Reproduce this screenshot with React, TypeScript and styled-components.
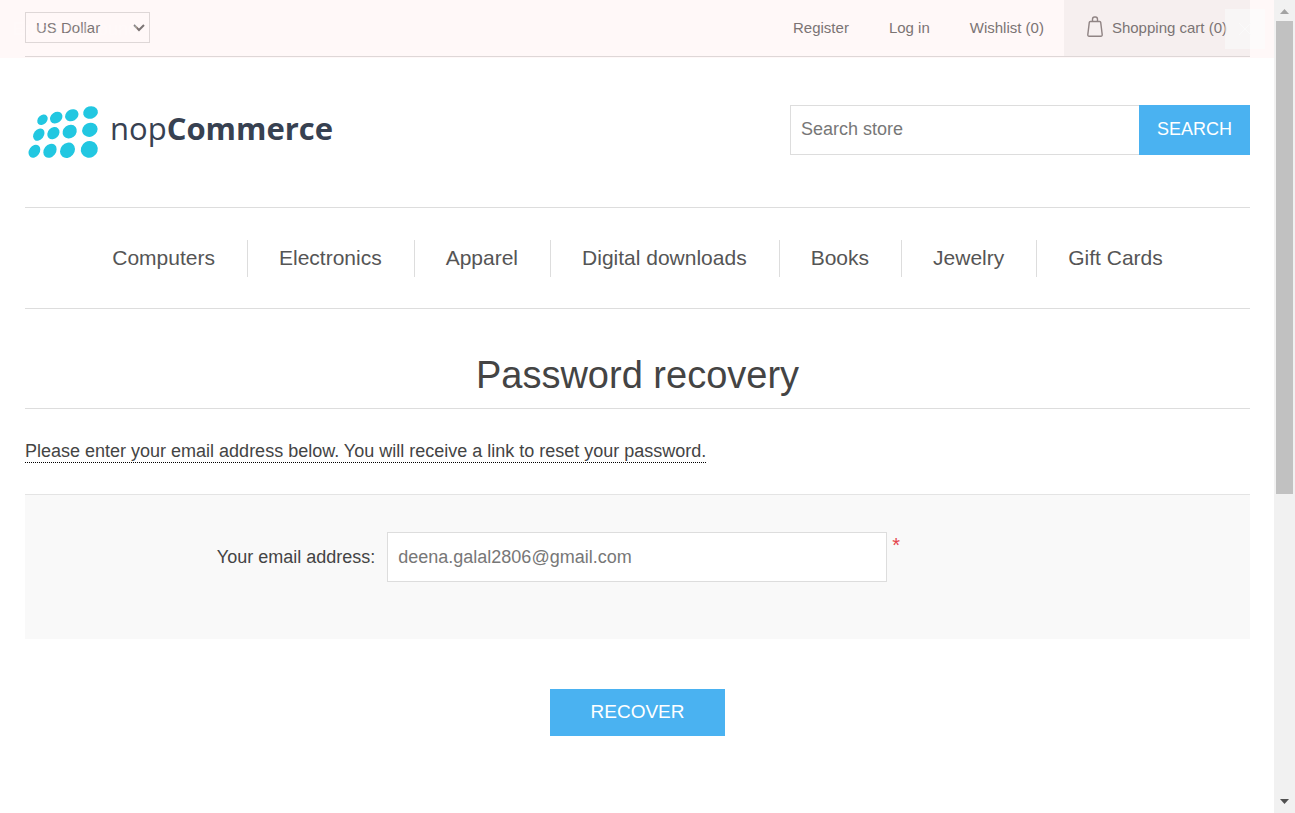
import React from 'react';
import styled, { createGlobalStyle } from 'styled-components';

const GlobalStyle = createGlobalStyle`
  * { box-sizing: border-box; }
  body {
    margin: 0;
    background: #fff;
    color: #444;
    font: 18px/22px "Liberation Sans", Arial, sans-serif;
  }
  a { color: inherit; text-decoration: none; }
  button, input, select { font-family: inherit; border-radius: 0; margin: 0; }
`;

const Window = styled.div`
  display: flex;
  min-height: 100vh;
`;

const Page = styled.div`
  position: relative;
  flex: 1;
  min-width: 0;
  padding: 0 24px 0 25px;
`;

const Notification = styled.div`
  position: absolute;
  inset: 0 0 auto 0;
  height: 58px;
  padding: 9px 9px 9px 13px;
  display: flex;
  align-items: center;
  justify-content: space-between;
  background: rgba(255, 60, 60, 0.035);
  pointer-events: none;
`;

const NotificationText = styled.p`
  margin: 0;
  color: rgba(255, 255, 255, 0.3);
`;

const CloseButton = styled.button`
  width: 40px;
  height: 40px;
  padding: 0;
  border: 0;
  display: flex;
  align-items: center;
  justify-content: center;
  background: rgba(250, 255, 255, 0.45);
  color: #fafafa;
`;

const TopBar = styled.div`
  height: 57px;
  border-bottom: 1px solid #ddd;
  display: flex;
  align-items: center;
  justify-content: space-between;
  font-size: 15px;
  color: #777;
`;

const CurrencyPicker = styled.div`
  position: relative;
  width: 125px;
  padding-bottom: 2px;
  svg {
    position: absolute;
    top: 12px;
    right: 5px;
    pointer-events: none;
  }
`;

const CurrencySelect = styled.select`
  display: block;
  appearance: none;
  width: 100%;
  height: 31px;
  padding: 0 20px 0 10px;
  border: 1px solid #ddd;
  background: transparent;
  color: #777;
  font-size: 15px;
`;

const HeaderLinks = styled.nav`
  display: flex;
  align-items: stretch;
  height: 100%;
`;

const HeaderLink = styled.a`
  display: flex;
  align-items: center;
  padding: 0 20px;
`;

const CartLink = styled(HeaderLink)`
  gap: 9px;
  padding: 0 23px;
  background: #f6f6f6;
  svg { margin-bottom: 2px; }
`;

const Header = styled.header`
  display: flex;
  align-items: center;
  justify-content: space-between;
  padding: 48px 0 52px;
  border-bottom: 1px solid #ddd;
`;

const LogoLink = styled.a`
  display: block;
  height: 50px;
  svg { display: block; overflow: visible; }
`;

const SearchForm = styled.form`
  display: flex;
  width: 460px;
`;

const TextInput = styled.input`
  height: 50px;
  min-width: 0;
  padding: 0 10px;
  border: 1px solid #ddd;
  background: #fff;
  color: #777;
  font-size: 18px;
  outline: 0;
  &::placeholder { color: #777; opacity: 1; }
`;

const SearchInput = styled(TextInput)`
  flex: 1;
  border-right: 0;
  padding-bottom: 2px;
`;

const PrimaryButton = styled.button<{ $large?: boolean }>`
  width: ${(p) => (p.$large ? 175 : 111)}px;
  height: ${(p) => (p.$large ? 47 : 50)}px;
  padding: 0 0 2px;
  border: 0;
  background: #4ab2f1;
  color: #fff;
  font-size: ${(p) => (p.$large ? 19 : 18)}px;
  text-transform: uppercase;
`;

const Menu = styled.ul`
  margin: 0;
  padding: 32px 0 31px;
  list-style: none;
  display: flex;
  justify-content: center;
  border-bottom: 1px solid #ddd;
`;

const MenuItem = styled.li`
  padding: 0 32px 2px;
  font-size: 21px;
  line-height: 35px;
  color: #555;
  & + & { border-left: 1px solid #ddd; padding-left: 31px; }
`;

const Title = styled.h1`
  margin: 0;
  padding: 43px 0 9px;
  border-bottom: 1px solid #ddd;
  text-align: center;
  font-size: 38px;
  line-height: 47px;
  font-weight: normal;
`;

const Instructions = styled.p`
  margin: 31px 0;
  line-height: 23px;
`;

const Tip = styled.span`
  display: inline-block;
  border-bottom: 1px dotted #000;
  line-height: 22px;
`;

const FieldPanel = styled.div`
  display: flex;
  min-height: 145px;
  padding: 37px 0 56px;
  border-top: 1px solid #e4e4e4;
  background: #f9f9f9;
`;

const FieldLabel = styled.label`
  width: 29%;
  padding: 0 5px 0 0;
  line-height: 50px;
  text-align: right;
`;

const EmailInput = styled(TextInput)`
  width: 500px;
  margin: 0 5px 0 7px;
`;

const Required = styled.span`
  color: #e4434b;
  font-size: 20px;
  line-height: 26px;
`;

const Actions = styled.div`
  display: flex;
  justify-content: center;
  padding: 50px 0;
`;

const ScrollTrack = styled.div`
  position: sticky;
  top: 0;
  height: 100vh;
  width: 21px;
  padding: 0 2px;
  display: flex;
  flex-direction: column;
  background: #f1f1f1;
`;

const ScrollArrow = styled.svg`
  display: block;
  width: 17px;
  height: 21px;
  flex: none;
`;

const ScrollThumb = styled.div`
  flex: 473;
  background: #c1c1c1;
`;

const ScrollRest = styled.div`
  flex: 298;
`;

const dots = [
  [42.5, 119.8, 5.9, 4.5, -45], [56.2, 117.6, 6.7, 5.3, -35], [71.8, 115.3, 7, 5.7, -30], [90.5, 112.5, 7.5, 6.2, -18],
  [38.8, 134.6, 6.7, 5, -52], [53.4, 133.2, 6.7, 5.5, -45], [69.7, 131.6, 7.5, 6.4, -38], [89.9, 129.8, 7.9, 6.9, -25],
  [34.4, 151.2, 7, 5.3, -55], [50, 150.8, 7.6, 6, -52], [67.5, 150.3, 8.2, 7, -50], [89.3, 149.4, 8.6, 8.2, -30],
];

const Logo = () => (
  <svg width="310" height="50" viewBox="25 105 310 50" role="img" aria-label="nopCommerce">
    {dots.map(([x, y, rx, ry, r]) => (
      <ellipse key={`${x}-${y}`} cx={x} cy={y} rx={rx} ry={ry} transform={`rotate(${r} ${x} ${y})`} fill="#22c7e1" />
    ))}
    <text x="110" y="140" fontFamily='"Open Sans", "Noto Sans", sans-serif' fontSize="31" fill="#374151">
      nop<tspan fontWeight="700">Commerce</tspan>
    </text>
  </svg>
);

const BagIcon = () => (
  <svg width="16" height="22" viewBox="0 0 16 22" fill="none" stroke="#8c8787" strokeWidth="1.4" aria-hidden="true">
    <path d="M3.300 5.500H12.700Q13.600 5.500 13.700 6.400L15.200 18.600Q15.300 20.300 13.800 20.300H2.200Q.7 20.300 .8 18.600L2.300 6.400Q2.400 5.500 3.300 5.500Z" />
    <path d="M5.500 5.500V3.200Q5.500 1 7.500 1H8.500Q10.500 1 10.500 3.200V5.500" />
  </svg>
);

const categories = ['Computers', 'Electronics', 'Apparel', 'Digital downloads', 'Books', 'Jewelry', 'Gift Cards'];

export default function App() {
  return (
    <>
      <GlobalStyle />
      <Window>
        <Page>
          <TopBar>
            <CurrencyPicker>
              <CurrencySelect aria-label="Currency" defaultValue="usd">
                <option value="usd">US Dollar</option>
                <option value="eur">Euro</option>
              </CurrencySelect>
              <svg width="12" height="8" viewBox="0 0 12 8" fill="none" stroke="#777" strokeWidth="2" aria-hidden="true">
                <path d="M1 1L6 6L11 1" />
              </svg>
            </CurrencyPicker>
            <HeaderLinks aria-label="Account">
              <HeaderLink href="#register">Register</HeaderLink>
              <HeaderLink href="#login">Log in</HeaderLink>
              <HeaderLink href="#wishlist">Wishlist (0)</HeaderLink>
              <CartLink href="#cart"><BagIcon />Shopping cart (0)</CartLink>
            </HeaderLinks>
          </TopBar>
          <Header>
            <LogoLink href="#home"><Logo /></LogoLink>
            <SearchForm onSubmit={(e) => e.preventDefault()}>
              <SearchInput type="text" placeholder="Search store" aria-label="Search store" />
              <PrimaryButton type="submit">Search</PrimaryButton>
            </SearchForm>
          </Header>
          <nav aria-label="Categories">
            <Menu>
              {categories.map((c) => (
                <MenuItem key={c}><a href="#category">{c}</a></MenuItem>
              ))}
            </Menu>
          </nav>
          <main>
            <Title>Password recovery</Title>
            <form onSubmit={(e) => e.preventDefault()}>
              <Instructions>
                <Tip>Please enter your email address below. You will receive a link to reset your password.</Tip>
              </Instructions>
              <FieldPanel>
                <FieldLabel htmlFor="email">Your email address:</FieldLabel>
                <EmailInput id="email" type="email" defaultValue="deena.galal2806@gmail.com" />
                <Required>*</Required>
              </FieldPanel>
              <Actions>
                <PrimaryButton type="submit" $large>Recover</PrimaryButton>
              </Actions>
            </form>
          </main>
          <Notification>
            <NotificationText>Email not found.</NotificationText>
            <CloseButton type="button" aria-label="Close">
              <svg width="14" height="14" viewBox="0 0 14 14" stroke="currentColor" aria-hidden="true">
                <path d="M1 1L13 13M13 1L1 13" />
              </svg>
            </CloseButton>
          </Notification>
        </Page>
        <ScrollTrack aria-hidden="true">
          <ScrollArrow viewBox="0 0 17 21"><path d="M4 14L8.500 9L13 14Z" fill="#a3a3a3" /></ScrollArrow>
          <ScrollThumb />
          <ScrollRest />
          <ScrollArrow viewBox="0 0 17 21"><path d="M4 7L8.500 12L13 7Z" fill="#505050" /></ScrollArrow>
        </ScrollTrack>
      </Window>
    </>
  );
}
